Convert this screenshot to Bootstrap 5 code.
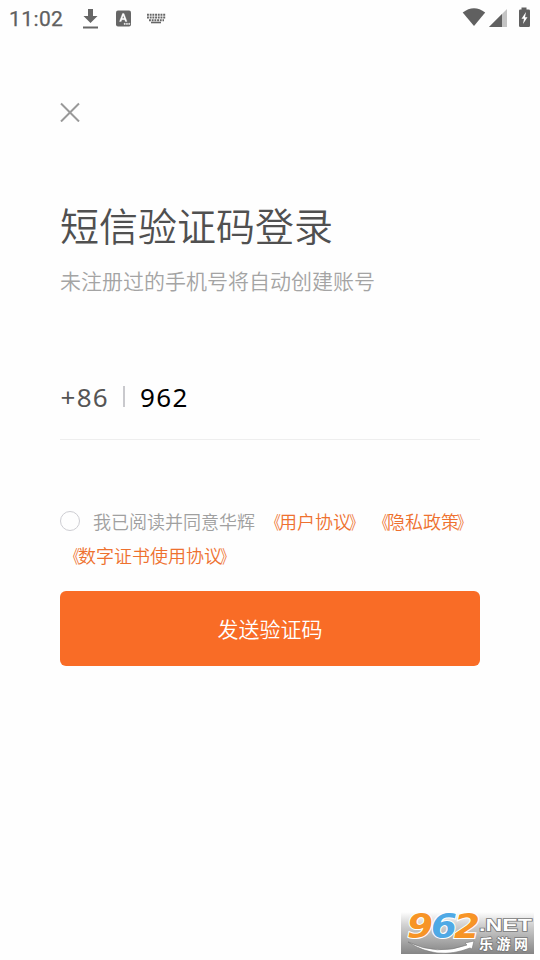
<!DOCTYPE html>
<html lang="zh-CN">
<head>
<meta charset="utf-8">
<meta name="viewport" content="width=device-width, initial-scale=1">
<title>短信验证码登录</title>
<link href="https://cdn.jsdelivr.net/npm/bootstrap@5.3.0/dist/css/bootstrap.min.css" rel="stylesheet">
<style>
body{font-family:"Noto Sans CJK SC",sans-serif;background:#fefefe;height:960px;overflow:hidden}
.statusbar{height:36px;padding-left:9px;color:#606060}
.clock{font:400 21px/38px Roboto,sans-serif;letter-spacing:.4px;width:73px;-webkit-text-stroke:.25px #606060}
.login{padding:66px 60px 0}
.close-btn{width:20px;height:20px;line-height:0}
.headline{font-size:39px;line-height:58px;font-weight:350;color:#505050;margin-top:73px}
.hint{font-size:21px;line-height:32px;font-weight:350;color:#a4a4a4;margin-top:11px}
.phone{font:26px/40px "Noto Sans",sans-serif;letter-spacing:1.3px;height:63px;margin-top:81px;border-bottom:1px solid #eee;color:#555;padding-left:.5px}
.divider{width:2px;height:21px;background:#c9c9cd;margin:9px 15.5px 0 13.5px}
.phone input{font:inherit;letter-spacing:inherit;color:#000;height:40px;min-width:0}
.agree{font-size:18px;line-height:34px;font-weight:350;color:#a0a0a0;margin-top:64px;height:68px}
.agree a{color:#ee712f;display:inline-block}
.agree b{display:inline-block;width:18px;font-weight:350}
.agree b:first-child{transform:translateX(2px) scaleX(.8);transform-origin:right}
.agree b:last-child{transform:translateX(-2px) scaleX(.8);transform-origin:left}
.ring{width:20px;height:20px;border:1.5px solid #cdcdd2;margin:-1px 13px 0 0}
.terms{margin-left:6px}
.send{height:75px;background:#f96c26;border-radius:6px;margin-top:19px;font-size:21px;font-weight:350;color:#fff}
.send:hover{background:#f96c26;color:#fff}
.brand{right:6px;bottom:6px;line-height:0}
</style>
</head>
<body class="position-relative">
<header class="statusbar d-flex">
  <span class="clock">11:02</span>
  <svg width="90" height="36" viewBox="82 0 90 36" fill="#666">
    <path d="M88 9h5v7h4.500l-7 7-7-7H88zM83 26.500h15v2H83z"/>
    <rect x="116" y="10.500" width="15" height="16" rx="2"/>
    <path d="M119.500 21.500l3-8h1.500l3 8h-1.700l-.6-1.800h-2.900l-.6 1.800zm2.800-3.200h1.900l-.95-2.800zM124 23.200h1.300v1.300H124zm2.300 0h1.300v1.300h-1.300zm2.300 0h1.300v1.300h-1.300z" fill="#fff" stroke="#fff" stroke-width=".3"/>
    <path d="M147 14.800h19M147 17.500h19M149 20.200h15" stroke="#666" stroke-width="1.900" stroke-dasharray="1.900 .8" fill="none"/>
    <path d="M151 21.700h10v1.600h-10z"/>
  </svg>
  <svg class="ms-auto" width="78" height="36" viewBox="462 0 78 36" fill="#606060">
    <path d="M462.700 12.500Q474 4 485.200 12.500L474 26z"/>
    <path d="M507 9v18h-18z" fill="#c4c4c4"/><path d="M502 14v13h-13z"/>
    <path d="M521.500 7.500h5v2h2.200q1.300 0 1.300 1.300v14.900q0 1.300-1.300 1.300h-8.400q-1.300 0-1.300-1.300V10.800q0-1.300 1.300-1.300h1.200z"/>
    <path d="M526 12l-4.500 6.800h2.500l-1 5.200 4.500-6.800H525z" fill="#fff"/>
  </svg>
</header>
<main class="login">
  <button type="button" class="close-btn btn p-0 border-0 d-block" aria-label="关闭">
    <svg width="20" height="20" viewBox="0 0 20 20"><path d="M1 1.500l18 18M19 1.500L1 19.500" stroke="#999" stroke-width="2"/></svg>
  </button>
  <h1 class="headline mb-0">短信验证码登录</h1>
  <p class="hint mb-0">未注册过的手机号将自动创建账号</p>
  <div class="phone d-flex">
    <span>+86</span><span class="divider flex-shrink-0"></span>
    <input class="border-0 p-0 bg-transparent flex-grow-1" type="tel" value="962" aria-label="手机号">
  </div>
  <div class="agree text-nowrap">
    <div class="d-flex align-items-center"><span class="ring rounded-circle"></span><span>我已阅读并同意华辉</span><a class="terms text-decoration-none" href="#"><b>《</b>用户协议<b>》</b></a><a class="text-decoration-none" href="#"><b>《</b>隐私政策<b>》</b></a></div>
    <div><a class="text-decoration-none" href="#"><b>《</b>数字证书使用协议<b>》</b></a></div>
  </div>
  <button type="button" class="send btn w-100 border-0 p-0 d-block">发送验证码</button>
</main>
<div class="brand position-absolute">
  <svg width="133" height="48" viewBox="0 0 133 48">
    <defs>
      <linearGradient id="bg" x1="0" y1="0" x2="0" y2="1"><stop offset="0" stop-color="#fefefe"/><stop offset=".3" stop-color="#d2d2d2"/><stop offset="1" stop-color="#858585"/></linearGradient>
    </defs>
    <rect y="6" width="133" height="42" fill="url(#bg)"/>
    <path d="M7 36Q36 50 66 39l-2-2 9-2-2 8-2-1Q36 55 7 36z" fill="#fff" stroke="#777" stroke-width=".6"/>
    <g font-family="DejaVu Sans,sans-serif" font-weight="700" font-style="italic" font-size="33" stroke="#fff" stroke-width="2" paint-order="stroke">
      <text x="6" y="32" textLength="26" lengthAdjust="spacingAndGlyphs" fill="#f79426">9</text>
      <text x="30" y="32" textLength="26" lengthAdjust="spacingAndGlyphs" fill="#4fa9e5">6</text>
      <text x="53" y="32" textLength="26" lengthAdjust="spacingAndGlyphs" fill="#f79426">2</text>
    </g>
    <g fill="#fff" stroke="#777" stroke-width="1.500" paint-order="stroke">
      <text x="78" y="25" font-family="Liberation Sans,sans-serif" font-weight="700" font-size="17" textLength="53" lengthAdjust="spacingAndGlyphs">.NET</text>
      <text x="78" y="43" font-family="Noto Sans CJK SC,sans-serif" font-weight="700" font-size="14" textLength="49">乐游网</text>
    </g>
  </svg>
</div>
<script src="https://cdn.jsdelivr.net/npm/bootstrap@5.3.0/dist/js/bootstrap.bundle.min.js"></script>
</body>
</html>
